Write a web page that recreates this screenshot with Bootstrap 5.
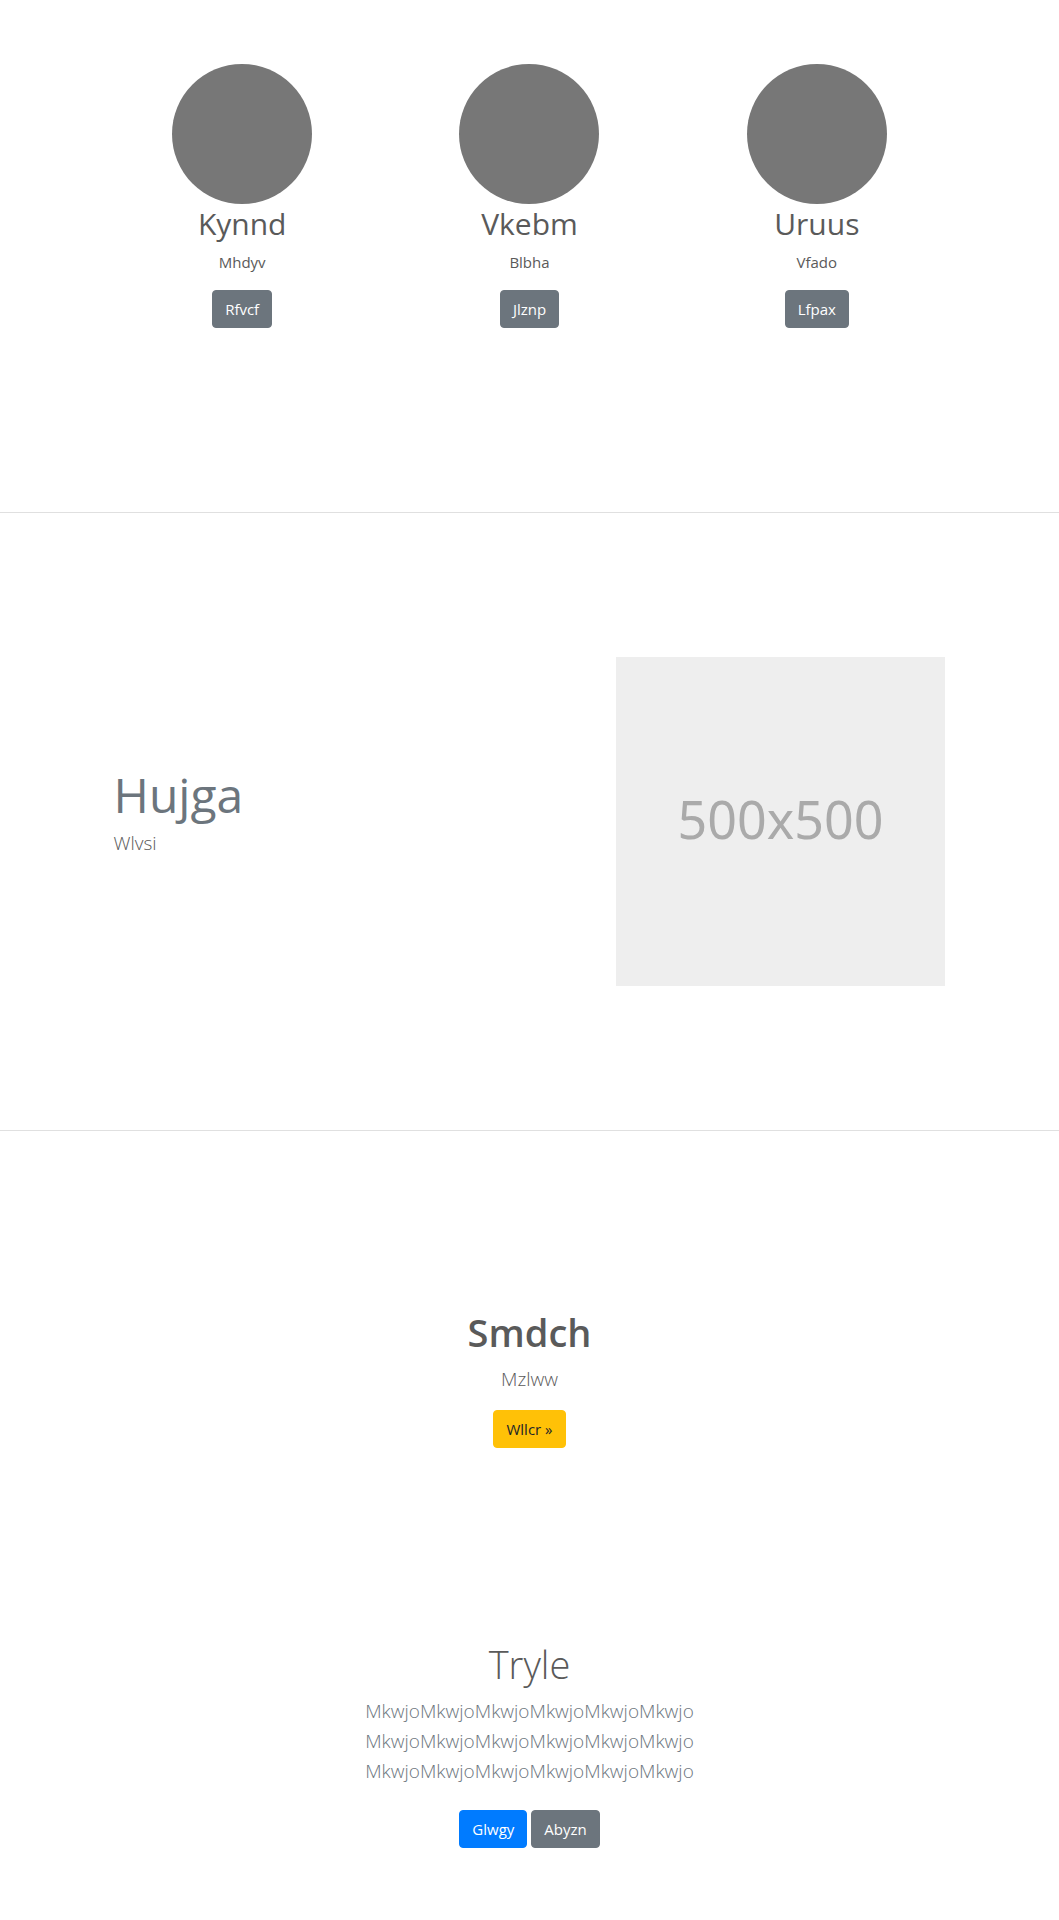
<!DOCTYPE html>
<html lang="en">
<head>
<meta charset="utf-8">
<meta name="viewport" content="width=device-width, initial-scale=1">
<title>Kynnd</title>
<link href="https://cdn.jsdelivr.net/npm/bootstrap@5.3.0/dist/css/bootstrap.min.css" rel="stylesheet">
<style>
  body { font-family: "Open Sans", "Noto Sans", sans-serif; font-size: 15px; line-height: 24px; color: #5a5a5a; }
  .page-block { max-width: 960px; padding: 64px; }
  .page-block > .row { --bs-gutter-x: 30px; }
  .rule { margin: 80px 0; border-top: 1px solid #e0e0e0; opacity: 1; }
  .disc { width: 140px; height: 140px; }
  .feature-name { margin-bottom: 6px; font-size: 30px; line-height: 40px; font-weight: 400; }
  .featurette-name { font-size: 48px; line-height: 50px; font-weight: 400; color: #6c757d; }
  .intro { font-size: 19px; line-height: 30px; font-weight: 300; }
  .soft { color: #6c757d; }
  .title-strong, .title-light { font-size: 38px; line-height: 48px; }
  .title-strong { font-weight: 600; }
  .title-light { font-weight: 300; }
  .btn { --bs-btn-font-size: 15px; --bs-btn-line-height: 24px; --bs-btn-border-radius: 4px; }
  .btn-primary { --bs-btn-bg: #007bff; --bs-btn-border-color: #007bff; }
  .btn-warning { --bs-btn-color: #212529; }
  .placeholder-art { font-family: "Noto Sans", sans-serif; font-size: 79px; }
  .call-out { padding: 97px 15px; }
  .closing { padding: 95px 15px 46px; }
</style>
<script src="https://cdn.jsdelivr.net/npm/bootstrap@5.3.0/dist/js/bootstrap.bundle.min.js" defer></script>
</head>
<body>
<main>
  <section class="container page-block">
    <div class="row text-center">
      <div class="col-4 mb-4">
        <svg class="disc d-block mx-auto" viewBox="0 0 140 140" aria-hidden="true"><circle cx="70" cy="70" r="70" fill="#777"/></svg>
        <h2 class="feature-name">Kynnd</h2>
        <p>Mhdyv</p>
        <p><a class="btn btn-secondary" href="#" role="button">Rfvcf</a></p>
      </div>
      <div class="col-4 mb-4">
        <svg class="disc d-block mx-auto" viewBox="0 0 140 140" aria-hidden="true"><circle cx="70" cy="70" r="70" fill="#777"/></svg>
        <h2 class="feature-name">Vkebm</h2>
        <p>Blbha</p>
        <p><a class="btn btn-secondary" href="#" role="button">Jlznp</a></p>
      </div>
      <div class="col-4 mb-4">
        <svg class="disc d-block mx-auto" viewBox="0 0 140 140" aria-hidden="true"><circle cx="70" cy="70" r="70" fill="#777"/></svg>
        <h2 class="feature-name">Uruus</h2>
        <p>Vfado</p>
        <p><a class="btn btn-secondary" href="#" role="button">Lfpax</a></p>
      </div>
    </div>
  </section>

  <hr class="rule">

  <section class="container page-block">
    <div class="row align-items-center">
      <div class="col-7">
        <h2 class="featurette-name mb-2">Hujga</h2>
        <p class="intro">Wlvsi</p>
      </div>
      <div class="col-5">
        <svg class="placeholder-art d-block w-100" viewBox="0 0 500 500" role="img" aria-label="500x500">
          <rect width="500" height="500" fill="#eee"/>
          <text x="250" y="277" text-anchor="middle" fill="#aaa">500x500</text>
        </svg>
      </div>
    </div>
  </section>

  <hr class="rule">

  <section class="container text-center call-out">
    <h1 class="title-strong mb-2">Smdch</h1>
    <p class="intro">Mzlww</p>
    <a class="btn btn-warning" href="#" role="button">Wllcr »</a>
  </section>

  <section class="container text-center closing">
    <h1 class="title-light mb-2">Tryle</h1>
    <p class="intro soft">MkwjoMkwjoMkwjoMkwjoMkwjoMkwjo<br>MkwjoMkwjoMkwjoMkwjoMkwjoMkwjo<br>MkwjoMkwjoMkwjoMkwjoMkwjoMkwjo</p>
    <p class="mb-3">
      <a href="#" class="btn btn-primary my-2">Glwgy</a>
      <a href="#" class="btn btn-secondary my-2">Abyzn</a>
    </p>
  </section>
</main>
</body>
</html>
